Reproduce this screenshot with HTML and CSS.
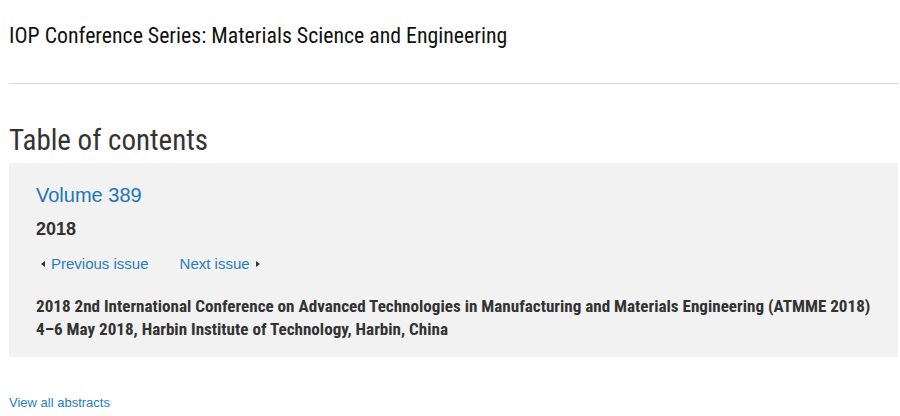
FILE: index.html
```html
<!DOCTYPE html>
<html>
<head>
<meta charset="utf-8">
<link rel="stylesheet" href="styles.css">
</head>
<body>
<header class="site-header">
  <h1 class="journal-title">IOP Conference Series: Materials Science and Engineering</h1>
</header>
<main class="content">
  <h2 class="toc-title">Table of contents</h2>
  <section class="issue-box">
    <h3 class="volume">Volume 389</h3>
    <div class="year">2018</div>
    <nav class="issue-nav">
      <a class="nav-link prev" href="#"><span class="tri tri-left"></span>Previous issue</a>
      <a class="nav-link next" href="#">Next issue<span class="tri tri-right"></span></a>
    </nav>
    <p class="conference">2018 2nd International Conference on Advanced Technologies in Manufacturing and Materials Engineering (ATMME 2018)<br>4–6 May 2018, Harbin Institute of Technology, Harbin, China</p>
  </section>
  <a class="view-all" href="#">View all abstracts</a>
</main>
</body>
</html>
```
FILE: styles.css
```css
html, body { margin: 0; padding: 0; background: #fff; }
body { padding: 0 2px 0 9px; font-family: "Liberation Sans", Arial, sans-serif; color: #222; }
.site-header { height: 84px; border-bottom: 1px solid #d9d9d9; box-sizing: border-box; padding-top: 23px; }
.journal-title { margin: 0; font-family: "Roboto Condensed", "Liberation Sans", sans-serif; font-weight: normal; font-size: 21.8px; line-height: 26px; color: #111; }
.content { display: flex; flex-direction: column; }
.toc-title { margin: 34px 0 0; font-family: "Roboto Condensed", "Roboto", sans-serif; font-weight: normal; font-size: 29px; line-height: 45px; color: #333; height: 45px; }
.issue-box { background: #f2f2f2; padding: 20px 27px 18px; height: 194px; box-sizing: border-box; }
.volume { margin: 0; font-weight: normal; font-size: 20px; line-height: 24px; color: #2275b9; }
.year { margin-top: 11px; font-weight: bold; font-size: 18px; line-height: 22px; color: #333; }
.issue-nav { display: flex; gap: 31px; margin-top: 15px; padding-left: 5px; }
.nav-link { color: #2a7cc0; text-decoration: none; font-size: 15px; line-height: 18px; display: flex; align-items: center; }
.tri { display: inline-block; width: 0; height: 0; border-top: 3px solid transparent; border-bottom: 3px solid transparent; }
.tri-left { border-right: 4px solid #333; margin-right: 6px; }
.tri-right { border-left: 4px solid #333; margin-left: 6px; }
.conference { margin: 22px 0 0; font-family: "Roboto Condensed", sans-serif; font-weight: bold; font-size: 17.1px; line-height: 23px; color: #333; }
.view-all { margin-top: 38px; font-family: "Liberation Sans", sans-serif; color: #2a7cc0; font-size: 13px; text-decoration: none; line-height: 16px; align-self: flex-start; }
```
